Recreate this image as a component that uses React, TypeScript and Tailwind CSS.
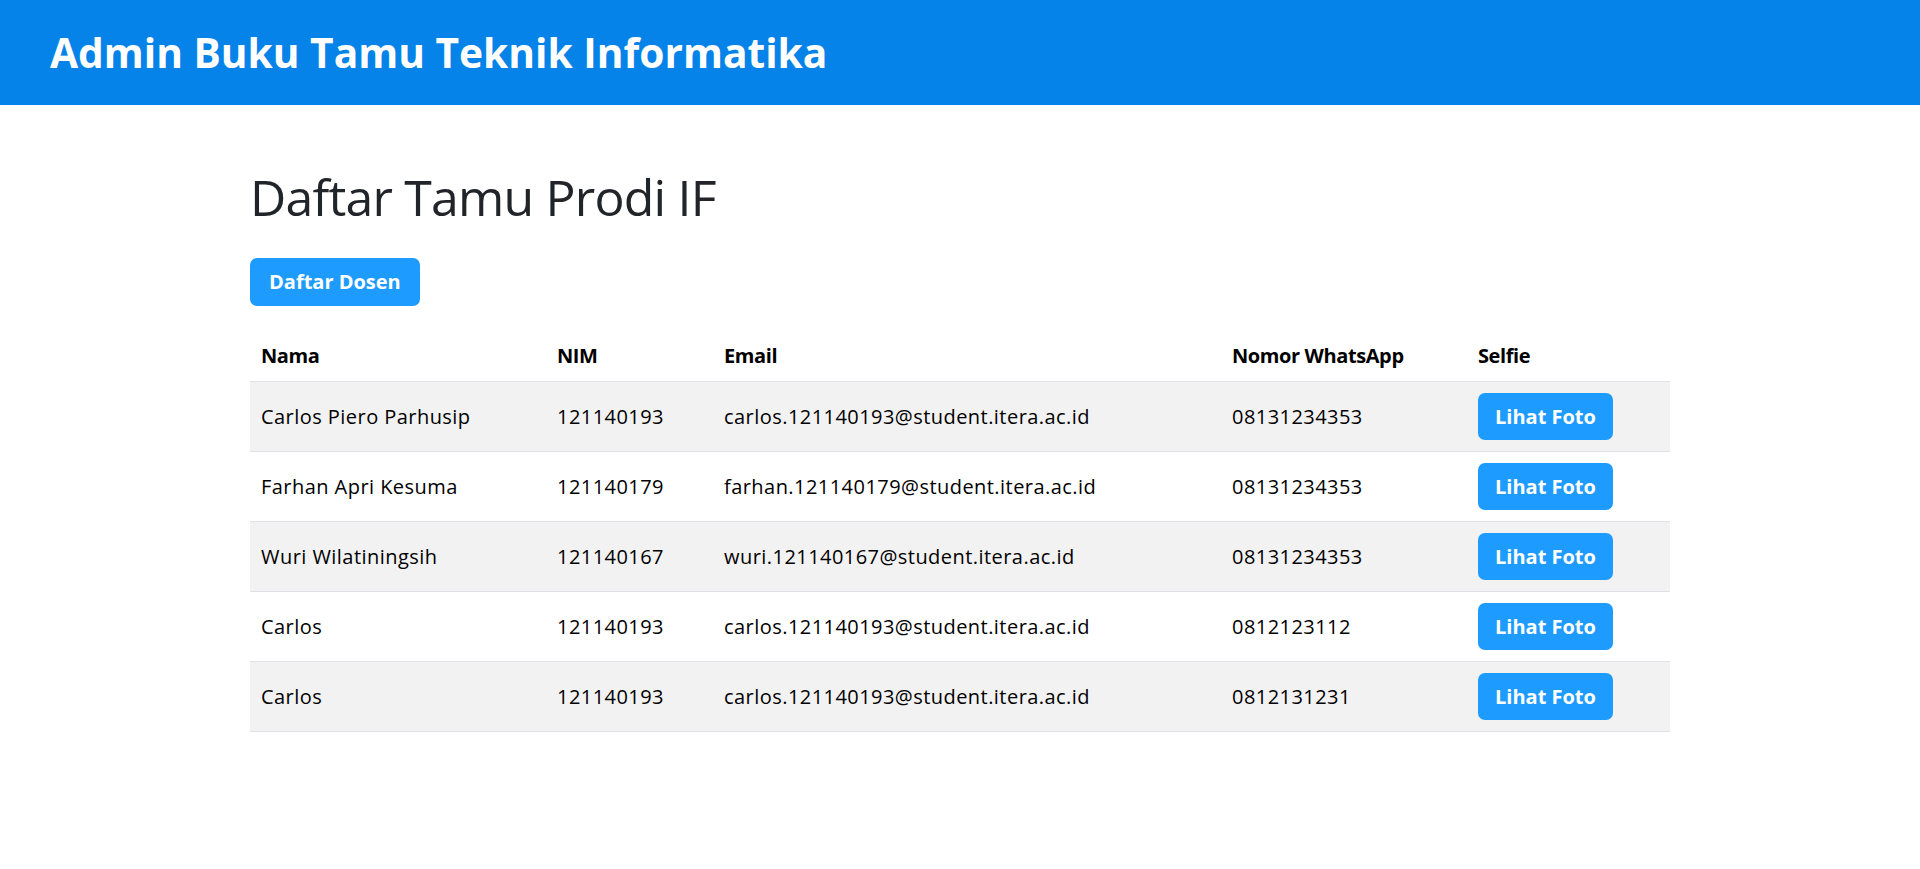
const guests = [
  { nama: 'Carlos Piero Parhusip', nim: '121140193', email: 'carlos.121140193@student.itera.ac.id', wa: '08131234353' },
  { nama: 'Farhan Apri Kesuma', nim: '121140179', email: 'farhan.121140179@student.itera.ac.id', wa: '08131234353' },
  { nama: 'Wuri Wilatiningsih', nim: '121140167', email: 'wuri.121140167@student.itera.ac.id', wa: '08131234353' },
  { nama: 'Carlos', nim: '121140193', email: 'carlos.121140193@student.itera.ac.id', wa: '0812123112' },
  { nama: 'Carlos', nim: '121140193', email: 'carlos.121140193@student.itera.ac.id', wa: '0812131231' },
]

export default function App() {
  return (
    <div className="min-h-screen bg-white font-['Segoe_UI','Open_Sans',sans-serif] text-[#212529]">
      <header className="flex h-[105px] items-center bg-[#0583e8] px-[50px]">
        <h1 className="text-[40.7px] font-bold leading-none text-white">Admin Buku Tamu Teknik Informatika</h1>
      </header>

      <main className="mx-auto w-[1420px] pt-[62px]">
        <h2 className="text-[50px] leading-[1.2] font-normal tracking-[-0.8px]">Daftar Tamu Prodi IF</h2>

        <button className="mt-[31px] h-[48px] rounded-[7px] bg-[#1e9bff] px-[19px] text-[20px] font-bold text-white">
          Daftar Dosen
        </button>

        <table className="mt-[25px] w-full table-fixed border-collapse text-[20px] leading-[30px] text-black">
          <colgroup>
            <col className="w-[296px]" />
            <col className="w-[167px]" />
            <col className="w-[508px]" />
            <col className="w-[246px]" />
            <col />
          </colgroup>
          <thead>
            <tr className="border-b border-[#dee2e6]">
              <th className="px-[11px] py-[10px] text-left font-bold tracking-[-0.4px]">Nama</th>
              <th className="px-[11px] py-[10px] text-left font-bold tracking-[-0.4px]">NIM</th>
              <th className="px-[11px] py-[10px] text-left font-bold tracking-[-0.4px]">Email</th>
              <th className="px-[11px] py-[10px] text-left font-bold tracking-[-0.4px]">Nomor WhatsApp</th>
              <th className="px-[11px] py-[10px] text-left font-bold tracking-[-0.4px]">Selfie</th>
            </tr>
          </thead>
          <tbody>
            {guests.map((g, i) => (
              <tr key={i} className={i % 2 === 0 ? 'border-b border-[#dee2e6] bg-[#f2f2f2]' : 'border-b border-[#dee2e6] bg-white'}>
                <td className="px-[11px] py-[11px] tracking-[0.45px]">{g.nama}</td>
                <td className="px-[11px] py-[11px] tracking-[0.45px]">{g.nim}</td>
                <td className="px-[11px] py-[11px] tracking-[0.45px]">{g.email}</td>
                <td className="px-[11px] py-[11px] tracking-[0.45px]">{g.wa}</td>
                <td className="px-[11px] py-[11px]">
                  <button className="h-[47px] rounded-[7px] bg-[#1e9bff] px-[17px] font-bold text-white">Lihat Foto</button>
                </td>
              </tr>
            ))}
          </tbody>
        </table>
      </main>
    </div>
  )
}
